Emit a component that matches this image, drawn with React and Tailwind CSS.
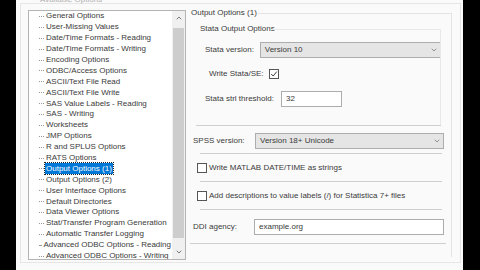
import { ChevronUp, ChevronDown } from 'lucide-react';

const options = [
  'General Options',
  'User-Missing Values',
  'Date/Time Formats - Reading',
  'Date/Time Formats - Writing',
  'Encoding Options',
  'ODBC/Access Options',
  'ASCII/Text File Read',
  'ASCII/Text File Write',
  'SAS Value Labels - Reading',
  'SAS - Writing',
  'Worksheets',
  'JMP Options',
  'R and SPLUS Options',
  'RATS Options',
  'Output Options (1)',
  'Output Options (2)',
  'User Interface Options',
  'Default Directories',
  'Data Viewer Options',
  'Stat/Transfer Program Generation',
  'Automatic Transfer Logging',
  'Advanced ODBC Options - Reading',
  'Advanced ODBC Options - Writing',
];

function Select({ value, className }) {
  return (
    <div className={`h-[16px] flex items-center justify-between bg-[#e5e5e5] border border-[#adadad] pl-[4px] pr-[2px] ${className}`}>
      <span>{value}</span>
      <ChevronDown className="w-[8px] h-[8px] text-[#666]" strokeWidth={2} />
    </div>
  );
}

function Box({ checked }) {
  return (
    <span className="w-[10px] h-[10px] border border-[#555] bg-white flex items-center justify-center shrink-0">
      {checked && (
        <svg viewBox="0 0 10 10" className="w-[8px] h-[8px]">
          <path d="M1.5 5 L4 7.5 L8.5 2" fill="none" stroke="#333" strokeWidth="1.2" />
        </svg>
      )}
    </span>
  );
}

export default function App() {
  return (
    <div
      className="w-[480px] h-[270px] bg-black flex overflow-hidden text-[8px] text-[#3a3a3a] whitespace-nowrap"
      style={{ fontFamily: '"Liberation Sans", Arial, sans-serif' }}
    >
      <div className="w-[16px] shrink-0" />
      <div className="w-[447px] shrink-0 bg-[#fafafa] relative flex">
        <div className="absolute left-[4px] right-[2px] bottom-[7px] top-[3px] border border-[#e6e6e6] pointer-events-none" />
        <div className="absolute left-[24px] top-0 leading-none -mt-[4px] text-[#b0b0b0]">Available Options</div>

        {/* list */}
        <div className="ml-[12px] mt-[10px] w-[158px] h-[250px] shrink-0 bg-white border border-[#b4b4b4] flex overflow-hidden">
          <div className="flex-1 min-w-0 pl-[10px] flex flex-col overflow-hidden">
            {options.map((o) => {
              const sel = o === 'Output Options (1)';
              return (
                <div key={o} className="h-[10.9px] shrink-0 flex items-center leading-none">
                  <span className="w-[5px] border-t border-dotted border-[#999] mr-[1px]" />
                  <span
                    className={
                      sel
                        ? 'bg-[#0078d7] text-white px-[1px] h-[11px] flex items-center outline outline-1 outline-dotted outline-[#222]'
                        : 'px-[1px]'
                    }
                  >
                    {o}
                  </span>
                </div>
              );
            })}
          </div>
          <div className="w-[13px] shrink-0 bg-[#f0f0f0] flex flex-col items-center">
            <ChevronUp className="w-[8px] h-[8px] mt-[3px] text-[#606060]" strokeWidth={2.5} />
            <div className="w-[11px] flex-1 bg-[#cdcdcd] mt-[6px] mb-[10px]" />
            <ChevronDown className="w-[8px] h-[8px] mb-[3px] text-[#606060]" strokeWidth={2.5} />
          </div>
        </div>

        {/* right */}
        <div className="ml-[4px] mt-[9px] w-[262px] h-[248px] shrink-0 relative flex flex-col">
          <div className="absolute left-[68px] right-0 top-[4px] border-t border-[#e3e3e3]" />
          <div className="absolute right-0 top-[4px] bottom-0 border-r border-[#e3e3e3]" />
          <div className="leading-none pl-[1px] h-[9px]">Output Options (1)</div>

          <div className="ml-[6px] mr-[11px] mt-[7px] h-[101px] relative border-b border-[#cfcfcf] flex flex-col">
            <div className="absolute left-[76px] right-0 top-[4px] border-t border-[#e8e8e8]" />
            <div className="absolute right-0 top-[4px] bottom-0 border-r border-[#e8e8e8]" />
            <div className="leading-none pl-[4px] h-[9px]">Stata Output Options</div>
            <div className="flex items-center mt-[8px] pl-[9px]">
              <span className="w-[55px]">Stata version:</span>
              <Select value="Version 10" className="w-[182px]" />
            </div>
            <div className="flex items-center mt-[10px] pl-[13px] gap-[5px]">
              <span>Write Stata/SE:</span>
              <Box checked />
            </div>
            <div className="flex items-center mt-[11px] pl-[9px]">
              <span className="w-[76px]">Stata strl threshold:</span>
              <div className="w-[61px] h-[16px] border border-[#adadad] bg-white pl-[4px] flex items-center">32</div>
            </div>
          </div>

          <div className="flex items-center mt-[7px] pl-[3px] pr-[8px]">
            <span className="w-[62px]">SPSS version:</span>
            <Select value="Version 18+ Unicode" className="flex-1" />
          </div>
          <div className="mx-[10px] mt-[4px] border-t border-[#cfcfcf]" />

          <div className="flex items-center gap-[2px] mt-[9px] pl-[7px] h-[10px]">
            <Box />
            <span>Write MATLAB DATE/TIME as strings</span>
          </div>
          <div className="mx-[10px] mt-[8px] border-t border-[#cfcfcf]" />

          <div className="flex items-center gap-[2px] mt-[9px] pl-[7px] h-[10px]">
            <Box />
            <span>Add descriptions to value labels (/) for Statistica 7+ files</span>
          </div>
          <div className="mx-[10px] mt-[8px] border-t border-[#cfcfcf]" />

          <div className="flex items-center mt-[9px] pl-[3px] pr-[8px]">
            <span className="w-[61px]">DDI agency:</span>
            <div className="flex-1 h-[16px] border border-[#adadad] bg-white pl-[4px] flex items-center">example.org</div>
          </div>
          <div className="mr-[6px] mt-[8px] border-t border-[#cfcfcf]" />
        </div>
      </div>
    </div>
  );
}
